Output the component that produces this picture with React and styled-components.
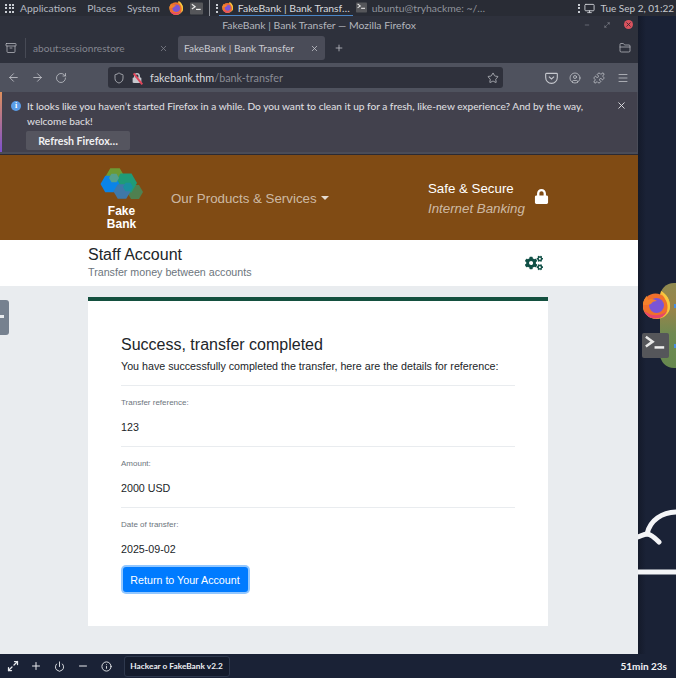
import React from 'react';
import styled, { createGlobalStyle } from 'styled-components';
import { FaCogs, FaLock } from 'react-icons/fa';
import {
  ArrowLeft, ArrowRight, RotateCw, Shield, Star, CircleUser, Puzzle, Menu, X, Plus, Minus, Power, Info,
  Maximize2, Monitor, FolderClosed, Archive,
} from 'lucide-react';

const GlobalStyle = createGlobalStyle`
* { box-sizing: border-box; margin: 0; padding: 0; }
html, body { width: 676px; height: 678px; overflow: hidden; background: #1a2236; }
body { font-family: "Liberation Sans", Arial, sans-serif; }
`;

const Shell = styled.div`
  width: 676px;
  height: 678px;
  display: flex;
  flex-direction: column;
`;

const TopBar = styled.div`
  height: 16px;
  flex: none;
  display: flex;
  align-items: center;
  background: #292c35;
  color: #b4b8c0;
  font: 10.4px Lato, sans-serif;
  padding-left: 5px;
  white-space: nowrap;
`;

const MenuItem = styled.span`
  margin-left: ${(p) => p.$ml || 0}px;
  display: ${(p) => (p.$icon ? 'flex' : 'inline')};
`;

const Dots = styled.span`
  display: grid;
  grid-template-columns: repeat(${(p) => p.$cols}, 2px);
  gap: 1.5px;
  margin-left: ${(p) => p.$ml || 0}px;
  flex: none;
  i { width: 2px; height: 2px; background: #c8ccd2; }
`;

const Sep = styled.span`
  width: 1px;
  height: 16px;
  background: #8d9098;
  margin-left: 6px;
`;

const TaskItem = styled.div`
  height: 16px;
  width: ${(p) => p.$w}px;
  margin-left: ${(p) => p.$ml || 0}px;
  display: flex;
  align-items: center;
  gap: 5px;
  padding-left: 3px;
  flex: none;
  color: ${(p) => (p.$active ? '#d8dade' : '#8f939c')};
  border-bottom: 1px solid ${(p) => (p.$active ? '#4a86c8' : 'transparent')};
`;

const Clock = styled.span`
  margin: 0 2px 0 6px;
  font-size: 10px;
  color: #c4c7cd;
`;

const Middle = styled.div`
  flex: 1;
  min-height: 0;
  display: flex;
`;

const Win = styled.div`
  width: 638px;
  flex: none;
  display: flex;
  flex-direction: column;
  background: #e9ecef;
`;

const TitleBar = styled.div`
  height: 17px;
  flex: none;
  background: #2e313c;
  color: #b4b7be;
  font: 10.4px Lato, sans-serif;
  display: grid;
  grid-template-columns: 1fr auto 1fr;
  align-items: center;
`;

const WinButtons = styled.div`
  grid-column: 3;
  display: flex;
  align-items: center;
  justify-content: flex-end;
  gap: 14px;
  padding-right: 5px;
  color: #9a9da5;
`;

const CloseDot = styled.span`
  width: 9px;
  height: 9px;
  border-radius: 50%;
  background: #d9525e;
  color: #3a2a30;
  display: flex;
  align-items: center;
  justify-content: center;
`;

const TabStrip = styled.div`
  height: 30px;
  flex: none;
  background: #2e313c;
  display: flex;
  align-items: center;
  color: #b9bbc2;
  font: 10.1px Lato, sans-serif;
  white-space: nowrap;
  padding-left: 5px;
`;

const TabDivider = styled.span`
  width: 1px;
  height: 20px;
  background: #474a55;
  margin: 0 1px 0 8px;
`;

const Tab = styled.div`
  width: 147px;
  height: 24px;
  border-radius: 3px;
  display: flex;
  align-items: center;
  justify-content: space-between;
  padding: 0 6px;
  margin-right: ${(p) => p.$mr || 0}px;
  background: ${(p) => (p.$active ? '#4a4c58' : 'transparent')};
  color: ${(p) => (p.$active ? '#c9cad0' : '#84868f')};
`;

const Spacer = styled.span`
  flex: 1;
`;

const NavBar = styled.div`
  height: 29px;
  flex: none;
  background: #4f525e;
  display: flex;
  align-items: center;
  padding-left: 1px;
  color: #c6c8ce;
`;

const NavBtn = styled.span`
  width: 24px;
  display: flex;
  justify-content: center;
  flex: none;
`;

const UrlBar = styled.div`
  width: 395px;
  height: 21px;
  flex: none;
  margin: 0 36px 0 35px;
  border-radius: 3px;
  background: #2f313c;
  display: flex;
  align-items: center;
  padding: 0 4px 0 5px;
  font: 10.8px Lato, sans-serif;
  color: #8b8d96;
`;

const UrlHost = styled.span`
  color: #d6d7db;
`;

const LockWrap = styled.span`
  position: relative;
  display: flex;
  margin: 0 8px 0 7px;
  color: #c6c8ce;
  &::after {
    content: '';
    position: absolute;
    left: 5px;
    top: -1px;
    width: 1.5px;
    height: 14px;
    background: #e0455a;
    transform: rotate(-38deg);
  }
`;

const Notice = styled.div`
  height: 63px;
  flex: none;
  background: #4a4c58;
  padding-bottom: 2px;
  border-bottom: 1px solid #2b2a33;
`;

const NoticeBox = styled.div`
  height: 100%;
  margin-right: 1px;
  background: #42414d;
  border-left: 2px solid #b05cc0;
  border-image: linear-gradient(#e0905a, #7a4fd0) 1;
  display: flex;
  padding: 7px 0 0 9px;
  color: #e2e2e6;
  font: 10.15px/15px Lato, sans-serif;
`;

const NoticeBody = styled.div`
  margin-left: 6px;
  width: 562px;
`;

const InfoDot = styled.span`
  width: 10px;
  height: 10px;
  margin-top: 2px;
  border-radius: 50%;
  background: #5a9de8;
  color: #fff;
  font: bold 8px/10px "Liberation Serif", serif;
  text-align: center;
  flex: none;
`;

const NoticeBtn = styled.button`
  display: block;
  width: 104px;
  height: 19px;
  margin: 2px 0 0 -1px;
  border: 0;
  border-radius: 2px;
  background: #55555f;
  color: #f0f0f2;
  font: 700 10.6px Lato, sans-serif;
`;

const NoticeClose = styled.span`
  margin: 1px 0 0 27px;
  color: #e2e2e6;
  flex: none;
`;

const BankHeader = styled.header`
  height: 85px;
  flex: none;
  background: #804b14;
  display: flex;
  padding-left: 100px;
`;

const LogoBlock = styled.div`
  width: 43px;
  padding-top: 12px;
  display: flex;
  flex-direction: column;
  align-items: center;
  color: #fff;
  font-weight: bold;
  font-size: 12px;
  line-height: 12.5px;
  text-align: center;
  span { margin-top: 5px; }
`;

const ProductsLink = styled.div`
  margin: 35px 0 0 28px;
  width: 257px;
  font-size: 13.3px;
  line-height: 18px;
  color: rgba(255, 255, 255, 0.62);
  display: flex;
  align-items: center;
  gap: 4px;
  height: 18px;
  &::after {
    content: '';
    border-top: 4px solid rgba(255, 255, 255, 0.8);
    border-left: 4px solid transparent;
    border-right: 4px solid transparent;
    margin-bottom: 2px;
  }
`;

const Secure = styled.div`
  width: 106px;
  padding-top: 24px;
  font-size: 13.3px;
  line-height: 20px;
  color: #fff;
  em { display: block; color: rgba(255, 255, 255, 0.62); }
`;

const LockIcon = styled.div`
  padding-top: 34px;
  color: #fff;
`;

const AccountBar = styled.div`
  height: 46px;
  flex: none;
  background: #fff;
  display: flex;
  align-items: center;
  justify-content: space-between;
  padding: 0 95px 0 88px;
`;

const AccountInfo = styled.div`
  padding-bottom: 3px;
`;

const AccountTitle = styled.h1`
  font-size: 16px;
  font-weight: normal;
  line-height: 19px;
  color: #212529;
`;

const AccountSub = styled.p`
  font-size: 10.7px;
  line-height: 14px;
  margin-top: 1px;
  color: #6c757d;
`;

const GearIcon = styled.span`
  display: flex;
  color: #0f4f45;
`;

const Content = styled.main`
  flex: 1;
  position: relative;
  padding: 11px 90px 0 88px;
`;

const SideHandle = styled.div`
  position: absolute;
  left: 0;
  top: 14px;
  width: 9px;
  height: 35px;
  border-radius: 0 3px 3px 0;
  background: #76818f;
  &::after {
    content: '';
    position: absolute;
    left: 0;
    top: 15px;
    width: 4px;
    height: 3px;
    background: #e9ecef;
  }
`;

const Card = styled.section`
  height: 329px;
  background: #fff;
  border-top: 4px solid #14503f;
  padding: 34px 33px 0;
`;

const CardTitle = styled.h2`
  font-size: 16px;
  font-weight: normal;
  line-height: 20px;
  color: #212529;
`;

const CardLead = styled.p`
  margin-top: 2px;
  font-size: 10.7px;
  line-height: 18px;
  color: #212529;
  padding-bottom: 10px;
`;

const Detail = styled.div`
  border-top: 1px solid #e9ecef;
  height: ${(p) => (p.$last ? 60 : 61)}px;
  padding-top: 12px;
`;

const DetailLabel = styled.div`
  font-size: 8px;
  line-height: 10px;
  color: #6c757d;
`;

const DetailValue = styled.div`
  margin-top: 12px;
  font-size: 10.7px;
  line-height: 14px;
  color: #212529;
`;

const ReturnBtn = styled.button`
  display: block;
  width: 125px;
  height: 25px;
  margin-left: 1.5px;
  border: 0;
  border-radius: 3px;
  background: #007bff;
  color: #fff;
  font: 10.7px "Liberation Sans", sans-serif;
  box-shadow: 0 0 0 2px rgba(38, 143, 255, 0.5);
`;

const Desktop = styled.div`
  flex: 1;
  position: relative;
  overflow: hidden;
  background: linear-gradient(90deg, #141a2a, #1a2236 8px);
`;

const Blob = styled.div`
  position: absolute;
  left: 22px;
  top: 267px;
  width: 60px;
  height: 85px;
  border-radius: 14px;
  background: linear-gradient(#8f8a50 0%, #9a8448 30%, #6f8a52 60%, #66884e 100%);
`;

const DeskIcon = styled.div`
  position: absolute;
  left: 4px;
  top: ${(p) => p.$top}px;
  display: flex;
`;

const BlueDot = styled.span`
  position: absolute;
  left: 36px;
  top: ${(p) => p.$top}px;
  width: 3px;
  height: 4px;
  background: #4a8fe0;
`;

const CloudArt = styled.svg`
  position: absolute;
  left: 0;
  top: 490px;
`;

const BottomBar = styled.div`
  height: 24px;
  flex: none;
  background: #1a2236;
  color: #e8eaee;
  display: flex;
  align-items: center;
  padding: 0 9px 0 1px;
`;

const BarBtn = styled.span`
  width: 23.5px;
  display: flex;
  justify-content: center;
  flex: none;
`;

const RoomBtn = styled.div`
  width: 106px;
  height: 21px;
  margin-left: 5px;
  border: 1px solid #2e384d;
  border-radius: 3px;
  background: #141b2c;
  color: #eef0f3;
  font: 700 8.3px/19px Lato, sans-serif;
  text-align: center;
  white-space: nowrap;
`;

const Timer = styled.span`
  margin-left: auto;
  font: 700 10px Lato, sans-serif;
  color: #f2f3f5;
`;

const FirefoxIcon = ({ size = 14 }) => (
  <svg width={size} height={size} viewBox="0 0 28 28" style={{ flex: 'none' }}>
    <path d="M19 0c5 3 9 8 9 15a13.5 13 0 0 1-27 0c0-4 1-7 4-10l1 4c3-2 6-3 9-2 2-2 4-4 4-7z" fill="#f5b93c" />
    <circle cx="13.5" cy="15" r="12.5" fill="#f0702c" />
    <path d="M19 0c5 3 9 8 9 15 0 3-1 6-3 8 1-6 1-11-2-15-1-3-3-5-4-8z" fill="#f8c83e" />
    <path d="M2 20a12.5 12.5 0 0 0 23 0c-5 5-15 6-23 0z" fill="#e8466a" />
    <circle cx="14.5" cy="14.5" r="7.5" fill="#7b55d6" />
    <path d="M1 14c0-4 2-7 4-9l1 4c3-2 6-1 9 1-3 0-5 1-6 3-2 1-5 1-8 1z" fill="#f4822c" />
  </svg>
);

const TermIcon = ({ size = 11 }) => (
  <svg width={size} height={size} viewBox="0 0 28 28" style={{ flex: 'none' }}>
    <rect width="28" height="26" y="1" rx="2" fill="#55565a" />
    <path d="M4 5l7 5-7 5" fill="none" stroke="#e8e8e8" strokeWidth="2.6" />
    <path d="M13 16h10" stroke="#f0f0f0" strokeWidth="2.6" />
  </svg>
);

const PocketIcon = () => (
  <svg width="13" height="12" viewBox="0 0 14 13" fill="none" stroke="currentColor" strokeWidth="1.2">
    <path d="M1.5 1.5h11a.8.8 0 0 1 .8.8V6a6.3 6.3 0 0 1-12.6 0V2.3a.8.8 0 0 1 .8-.8z" />
    <path d="M4.2 5l2.8 2.6L9.8 5" />
  </svg>
);

const hexPoints = (cx, cy, r) =>
  [0, 60, 120, 180, 240, 300]
    .map((a) => `${cx + r * Math.cos((a * Math.PI) / 180)},${cy + r * Math.sin((a * Math.PI) / 180)}`)
    .join(' ');

const BankLogo = () => (
  <svg width="43" height="33" viewBox="0 0 43 33">
    <polygon points={hexPoints(15, 9.5, 9.5)} fill="#6c9a35" />
    <polygon points={hexPoints(35, 25, 8)} fill="#4f8050" />
    <polygon points={hexPoints(26, 16, 11)} fill="#1f9b78" />
    <polygon points={hexPoints(10, 17, 9.5)} fill="#0a84e8" />
    <polygon points={hexPoints(22, 24.5, 8.5)} fill="#3f78a8" />
    <polygon points={hexPoints(14, 11, 5)} fill="#55a08c" />
    <polygon points={hexPoints(28, 20, 5)} fill="#1a90a0" />
  </svg>
);

const details = [
  { label: 'Transfer reference:', value: '123' },
  { label: 'Amount:', value: '2000 USD' },
  { label: 'Date of transfer:', value: '2025-09-02', last: true },
];

const App = () => {
  return (
    <>
      <GlobalStyle />
      <Shell>
        <TopBar>
          <Dots $cols={3}>{Array.from({ length: 9 }, (_, i) => <i key={i} />)}</Dots>
          <MenuItem $ml={6}>Applications</MenuItem>
          <MenuItem $ml={11}>Places</MenuItem>
          <MenuItem $ml={11}>System</MenuItem>
          <MenuItem $ml={9} $icon><FirefoxIcon /></MenuItem>
          <MenuItem $ml={7} $icon><TermIcon size={13} /></MenuItem>
          <Sep />
          <Dots $cols={1} $ml={6}><i /><i /><i /></Dots>
          <TaskItem $active $w={134} $ml={1}><FirefoxIcon size={11} />FakeBank | Bank Transf…</TaskItem>
          <TaskItem $w={130} $ml={0}><TermIcon />ubuntu@tryhackme: ~/…</TaskItem>
          <Spacer />
          <Dots $cols={1}><i /><i /><i /></Dots>
          <MenuItem $ml={4} $icon><Monitor size={11} color="#d0d2d8" /></MenuItem>
          <Clock>Tue Sep 2, 01:22</Clock>
        </TopBar>
        <Middle>
          <Win>
            <TitleBar>
              <span />
              <span>FakeBank | Bank Transfer — Mozilla Firefox</span>
              <WinButtons>
                <Minus size={6} />
                <Maximize2 size={6} />
                <CloseDot><X size={7} strokeWidth={3} /></CloseDot>
              </WinButtons>
            </TitleBar>
            <TabStrip>
              <Archive size={12} strokeWidth={1.5} />
              <TabDivider />
              <Tab $mr={4}>about:sessionrestore<X size={9} /></Tab>
              <Tab $active>FakeBank | Bank Transfer<X size={9} /></Tab>
              <MenuItem $ml={9} $icon><Plus size={10} /></MenuItem>
              <Spacer />
              <MenuItem $icon style={{ marginRight: 7 }}><FolderClosed size={12} strokeWidth={1.5} /></MenuItem>
            </TabStrip>
            <NavBar>
              <NavBtn><ArrowLeft size={13} strokeWidth={1.5} /></NavBtn>
              <NavBtn><ArrowRight size={13} strokeWidth={1.5} /></NavBtn>
              <NavBtn><RotateCw size={12} strokeWidth={1.5} /></NavBtn>
              <UrlBar>
                <Shield size={12} strokeWidth={1.5} color="#c6c8ce" />
                <LockWrap><FaLock size={10} /></LockWrap>
                <UrlHost>fakebank.thm</UrlHost>/bank-transfer
                <Spacer />
                <Star size={12} strokeWidth={1.5} color="#c6c8ce" />
              </UrlBar>
              <NavBtn><PocketIcon /></NavBtn>
              <NavBtn><CircleUser size={12} strokeWidth={1.5} /></NavBtn>
              <NavBtn><Puzzle size={12} strokeWidth={1.5} /></NavBtn>
              <NavBtn><Menu size={12} strokeWidth={1.5} /></NavBtn>
            </NavBar>
            <Notice>
              <NoticeBox>
                <InfoDot>i</InfoDot>
                <NoticeBody>
                  It looks like you haven’t started Firefox in a while. Do you want to clean it up for a fresh, like-new experience? And by the way, welcome back!
                  <NoticeBtn>Refresh Firefox…</NoticeBtn>
                </NoticeBody>
                <NoticeClose><X size={11} /></NoticeClose>
              </NoticeBox>
            </Notice>
            <BankHeader>
              <LogoBlock>
                <BankLogo />
                <span>Fake<br />Bank</span>
              </LogoBlock>
              <ProductsLink>Our Products &amp; Services</ProductsLink>
              <Secure>Safe &amp; Secure<em>Internet Banking</em></Secure>
              <LockIcon><FaLock size={15} /></LockIcon>
            </BankHeader>
            <AccountBar>
              <AccountInfo>
                <AccountTitle>Staff Account</AccountTitle>
                <AccountSub>Transfer money between accounts</AccountSub>
              </AccountInfo>
              <GearIcon><FaCogs size={18} /></GearIcon>
            </AccountBar>
            <Content>
              <SideHandle />
              <Card>
                <CardTitle>Success, transfer completed</CardTitle>
                <CardLead>You have successfully completed the transfer, here are the details for reference:</CardLead>
                {details.map((d) => (
                  <Detail key={d.label} $last={d.last}>
                    <DetailLabel>{d.label}</DetailLabel>
                    <DetailValue>{d.value}</DetailValue>
                  </Detail>
                ))}
                <ReturnBtn>Return to Your Account</ReturnBtn>
              </Card>
            </Content>
          </Win>
          <Desktop>
            <Blob />
            <BlueDot $top={288} />
            <BlueDot $top={328} />
            <DeskIcon $top={275}><FirefoxIcon size={28} /></DeskIcon>
            <DeskIcon $top={316}><TermIcon size={27} /></DeskIcon>
            <CloudArt width="38" height="70" viewBox="0 0 38 70" fill="none" stroke="#f4f5f7" strokeWidth="5" strokeLinecap="round">
              <path d="M40 6C24 6 12 14 9 28" />
              <path d="M0 31c3-1 6-3 9-3 4 0 8 4 12 8" />
              <path d="M0 66H40" />
            </CloudArt>
          </Desktop>
        </Middle>
        <BottomBar>
          <BarBtn><Maximize2 size={12} strokeWidth={2.5} /></BarBtn>
          <BarBtn><Plus size={12} /></BarBtn>
          <BarBtn><Power size={11} /></BarBtn>
          <BarBtn><Minus size={12} /></BarBtn>
          <BarBtn><Info size={11} /></BarBtn>
          <RoomBtn>Hackear o FakeBank v2.2</RoomBtn>
          <Timer>51min 23s</Timer>
        </BottomBar>
      </Shell>
    </>
  );
};

export default App;
